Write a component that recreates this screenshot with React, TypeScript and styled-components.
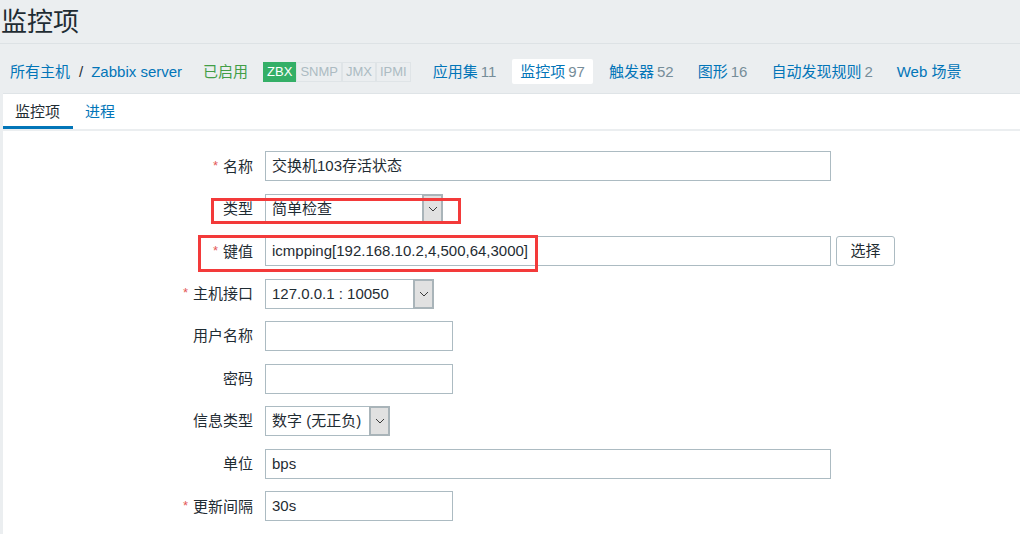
import React from 'react'
import styled, { createGlobalStyle } from 'styled-components'

const GlobalStyle = createGlobalStyle`
  html, body { margin: 0; padding: 0; height: 100%; }
  body {
    background: #ebeef0;
    font-family: "Liberation Sans", "Noto Sans CJK SC", sans-serif;
    color: #1f2c33;
    overflow: hidden;
  }
`

const Page = styled.div`
  display: flex;
  flex-direction: column;
  min-height: 100vh;
`

const TitleBar = styled.div`
  height: 43px;
  border-bottom: 1px solid #dde2e5;
  display: flex;
  align-items: center;
  padding-left: 1px;
`

const Title = styled.h1`
  margin: 0;
  font-size: 26px;
  font-weight: normal;
  line-height: 30px;
  color: #1f2c33;
`

const Nav = styled.div`
  display: flex;
  align-items: center;
  height: 25px;
  padding: 15px 0 9px 10px;
  font-size: 15px;
  line-height: 25px;
  white-space: nowrap;
`

const Crumb = styled.span`
  color: #0275b8;
`

const Sep = styled.span`
  color: #1f2c33;
  margin: 0 8px 0 9px;
`

const Status = styled.span`
  color: #429e47;
  margin-left: 21px;
`

const Badges = styled.div`
  display: flex;
  margin-left: 15px;
  margin-right: 14px;
`

const Badge = styled.span<{ $on?: boolean }>`
  font-size: 13px;
  line-height: 18px;
  padding: 0 3px;
  border: 1px solid ${p => (p.$on ? '#34af67' : '#dfe4e7')};
  background: ${p => (p.$on ? '#34af67' : '#ebeef0')};
  color: ${p => (p.$on ? '#fff' : '#acbbc2')};
  & + & { border-left: 1px solid #dfe4e7; }
`

const NavItems = styled.div`
  display: flex;
  gap: 8px;
`

const NavItem = styled.span<{ $active?: boolean }>`
  padding: 0 8px;
  height: 25px;
  border-radius: 2px;
  color: #0275b8;
  background: ${p => (p.$active ? '#fff' : 'transparent')};
`

const Count = styled.span`
  color: #768d99;
  margin-left: 3px;
`

const Panel = styled.div`
  flex: 1;
  margin-left: 3px;
  background: #fff;
  border-top: 1px solid #dfe4e7;
`

const TabBar = styled.div`
  display: flex;
  height: 35px;
  border-bottom: 2px solid #ebeef0;
`

const Tab = styled.div<{ $active?: boolean }>`
  padding: 1px 12px 0;
  font-size: 15px;
  line-height: 34px;
  height: 35px;
  box-sizing: border-box;
  color: ${p => (p.$active ? '#1f2c33' : '#0275b8')};
  border-bottom: 3px solid ${p => (p.$active ? '#0275b8' : 'transparent')};
  margin-bottom: -1px;
  min-width: ${p => (p.$active ? '70px' : 'auto')};
`

const Form = styled.div`
  display: flex;
  flex-direction: column;
  gap: 12.5px;
  padding-top: 20px;
`

const Row = styled.div`
  position: relative;
  display: grid;
  grid-template-columns: 250px 1fr;
  column-gap: 12px;
  align-items: center;
  height: 30px;
`

const Label = styled.label`
  text-align: right;
  font-size: 15px;
  line-height: 20px;
  color: #1f2c33;
`

const Star = styled.span`
  color: #e45959;
  font-size: 13px;
  margin-right: 5px;
  vertical-align: 2px;
`

const Field = styled.div`
  display: flex;
  align-items: center;
  gap: 5px;
`

const Input = styled.div<{ $w: number }>`
  box-sizing: border-box;
  width: ${p => p.$w}px;
  height: 30px;
  border: 1px solid #acbbc2;
  padding: 0 6px;
  font-size: 15px;
  line-height: 28px;
  color: #1f2c33;
  white-space: nowrap;
  overflow: hidden;
`

const Select = styled.div<{ $w: number }>`
  box-sizing: border-box;
  width: ${p => p.$w}px;
  height: 30px;
  display: flex;
  border: 1px solid #acbbc2;
  font-size: 15px;
  line-height: 28px;
`

const SelectText = styled.span`
  flex: 1;
  padding: 0 6px;
  white-space: nowrap;
`

const Arrow = styled.span`
  box-sizing: border-box;
  width: 21px;
  height: 30px;
  margin: -1px -1px -1px 0;
  background: #e1e1e1;
  border: 2px solid #a9b4b9;
  display: flex;
  align-items: center;
  justify-content: center;
`

const Button = styled.div`
  box-sizing: border-box;
  width: 59px;
  height: 30px;
  border: 1px solid #acbbc2;
  border-radius: 3px;
  background: #fff;
  text-align: center;
  font-size: 15px;
  line-height: 28px;
  color: #1f2c33;
`

const Mark = styled.div<{ $l: number; $t: number; $w: number; $h: number }>`
  position: absolute;
  left: ${p => p.$l}px;
  top: ${p => p.$t}px;
  width: ${p => p.$w}px;
  height: ${p => p.$h}px;
  box-sizing: border-box;
  border: 3px solid #f33a3a;
  pointer-events: none;
`

const Chevron = () => (
  <svg width="10" height="6" viewBox="0 0 10 6">
    <polyline points="1,1 5,5 9,1" fill="none" stroke="#3a3a3a" strokeWidth="1" />
  </svg>
)

const Drop = ({ w, text }: { w: number; text: string }) => (
  <Select $w={w}>
    <SelectText>{text}</SelectText>
    <Arrow><Chevron /></Arrow>
  </Select>
)

const App = () => {
  return (
    <Page>
      <GlobalStyle />
      <TitleBar><Title>监控项</Title></TitleBar>
      <Nav>
        <Crumb>所有主机</Crumb>
        <Sep>/</Sep>
        <Crumb>Zabbix server</Crumb>
        <Status>已启用</Status>
        <Badges>
          <Badge $on>ZBX</Badge>
          <Badge>SNMP</Badge>
          <Badge>JMX</Badge>
          <Badge>IPMI</Badge>
        </Badges>
        <NavItems>
          <NavItem>应用集<Count>11</Count></NavItem>
          <NavItem $active>监控项<Count>97</Count></NavItem>
          <NavItem>触发器<Count>52</Count></NavItem>
          <NavItem>图形<Count>16</Count></NavItem>
          <NavItem>自动发现规则<Count>2</Count></NavItem>
          <NavItem>Web 场景</NavItem>
        </NavItems>
      </Nav>
      <Panel>
        <TabBar>
          <Tab $active>监控项</Tab>
          <Tab>进程</Tab>
        </TabBar>
        <Form>
          <Row>
            <Label><Star>*</Star>名称</Label>
            <Field><Input $w={566}>交换机103存活状态</Input></Field>
          </Row>
          <Row>
            <Label>类型</Label>
            <Field><Drop w={178} text="简单检查" /></Field>
            <Mark $l={208} $t={4} $w={250} $h={26} />
          </Row>
          <Row>
            <Label><Star>*</Star>键值</Label>
            <Field>
              <Input $w={566}>icmpping[192.168.10.2,4,500,64,3000]</Input>
              <Button>选择</Button>
            </Field>
            <Mark $l={195} $t={-1} $w={340} $h={37} />
          </Row>
          <Row>
            <Label><Star>*</Star>主机接口</Label>
            <Field><Drop w={169} text="127.0.0.1 : 10050" /></Field>
          </Row>
          <Row>
            <Label>用户名称</Label>
            <Field><Input $w={188} /></Field>
          </Row>
          <Row>
            <Label>密码</Label>
            <Field><Input $w={188} /></Field>
          </Row>
          <Row>
            <Label>信息类型</Label>
            <Field><Drop w={125} text="数字 (无正负)" /></Field>
          </Row>
          <Row>
            <Label>单位</Label>
            <Field><Input $w={566}>bps</Input></Field>
          </Row>
          <Row>
            <Label><Star>*</Star>更新间隔</Label>
            <Field><Input $w={188}>30s</Input></Field>
          </Row>
        </Form>
      </Panel>
    </Page>
  )
}

export default App
